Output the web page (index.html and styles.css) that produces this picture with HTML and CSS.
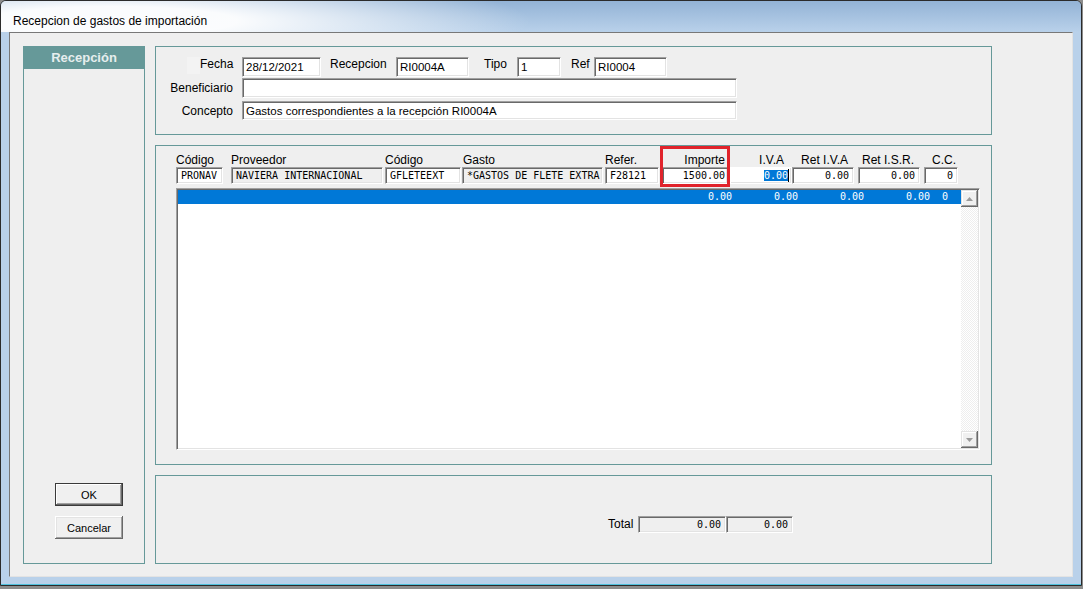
FILE: index.html
```html
<!DOCTYPE html>
<html lang="es">
<head>
  <meta charset="UTF-8">
  <meta name="viewport" content="width=device-width, initial-scale=1.0">
  <title>Recepcion de gastos de importación</title>
  <link rel="stylesheet" href="styles.css">
</head>
<body>
  <div class="window">
    <div class="titlebar">
      <span class="title">Recepcion de gastos de importación</span>
    </div>

    <div class="client">
      <div class="side">
        <div class="side-head">Recepción</div>
        <div class="side-buttons">
          <button class="btn btn-default">OK</button>
          <button class="btn">Cancelar</button>
        </div>
      </div>

      <div class="main">
        <!-- cabecera -->
        <div class="panel head-panel">
          <div class="form-row row-top">
            <span class="ghost"></span>
            <span class="lbl lbl-fecha">Fecha</span>
            <div class="field f-fecha">28/12/2021</div>
            <span class="lbl lbl-recep">Recepcion</span>
            <div class="field f-recep">RI0004A</div>
            <span class="lbl lbl-tipo">Tipo</span>
            <div class="field f-tipo">1</div>
            <span class="lbl lbl-ref">Ref</span>
            <div class="field f-ref">RI0004</div>
          </div>
          <div class="form-row row-benef">
            <span class="lbl lbl-wide">Beneficiario</span>
            <div class="field f-wide"></div>
          </div>
          <div class="form-row row-concepto">
            <span class="lbl lbl-wide">Concepto</span>
            <div class="field f-wide">Gastos correspondientes a la recepción RI0004A</div>
          </div>
        </div>

        <!-- detalle -->
        <div class="panel grid-panel">
          <div class="cols">
            <div class="col c1">
              <span class="col-label">Código</span>
              <div class="field mono">PRONAV</div>
            </div>
            <div class="col c2">
              <span class="col-label">Proveedor</span>
              <div class="field mono ro">NAVIERA INTERNACIONAL</div>
            </div>
            <div class="col c3">
              <span class="col-label">Código</span>
              <div class="field mono">GFLETEEXT</div>
            </div>
            <div class="col c4">
              <span class="col-label">Gasto</span>
              <div class="field mono ro">*GASTOS DE FLETE EXTRA</div>
            </div>
            <div class="col c5">
              <span class="col-label">Refer.</span>
              <div class="field mono">F28121</div>
            </div>
            <div class="col col-num c6">
              <span class="col-label">Importe</span>
              <div class="field mono num tight">1500.00</div>
            </div>
            <div class="col col-num c7">
              <span class="col-label">I.V.A</span>
              <div class="field mono num focus"><span class="sel">0.00</span><span class="caret"></span></div>
            </div>
            <div class="col col-num c8">
              <span class="col-label">Ret I.V.A</span>
              <div class="field mono num">0.00</div>
            </div>
            <div class="col col-num c9">
              <span class="col-label">Ret I.S.R.</span>
              <div class="field mono num">0.00</div>
            </div>
            <div class="col col-num c10">
              <span class="col-label">C.C.</span>
              <div class="field mono num">0</div>
            </div>
          </div>

          <div class="list">
            <div class="rows">
              <div class="row-sel">
                <span class="v0">0.00</span>
                <span class="v1">0.00</span>
                <span class="v1">0.00</span>
                <span class="v1">0.00</span>
                <span class="v4">0</span>
              </div>
            </div>
            <div class="scrollbar">
              <div class="sb-btn">
                <svg width="7" height="4" viewBox="0 0 7 4"><polygon points="0,4 7,4 3.5,0" fill="#9b9b9b"/></svg>
              </div>
              <div class="sb-track"></div>
              <div class="sb-btn">
                <svg width="7" height="4" viewBox="0 0 7 4"><polygon points="0,0 7,0 3.5,4" fill="#9b9b9b"/></svg>
              </div>
            </div>
          </div>

          <div class="highlight"></div>
        </div>

        <!-- totales -->
        <div class="panel total-panel">
          <span class="lbl total-lbl">Total</span>
          <div class="field mono num ro t1">0.00</div>
          <div class="field mono num ro t2">0.00</div>
        </div>
      </div>
    </div>
  </div>
</body>
</html>
```

FILE: styles.css
```css
* {
  box-sizing: border-box;
}

html, body {
  margin: 0;
}

body {
  width: 1083px;
  height: 589px;
  overflow: hidden;
  background: #8c8c8c;
  font-family: "Liberation Sans", Arial, sans-serif;
  font-size: 11.5px;
  color: #000;
}

.window {
  width: 1082px;
  height: 586px;
  display: flex;
  flex-direction: column;
  padding: 0 8px 8px;
  background: #b9d1ea;
  border: 1px solid #2b2b2b;
  border-radius: 6px 6px 0 0;
  box-shadow: inset 0 -1px 0 #4fc0dc;
}

.titlebar {
  flex: none;
  height: 31px;
  margin: 0 -8px;
  padding: 13px 0 0 12px;
  border-radius: 5px 5px 0 0;
  background:
    radial-gradient(ellipse 420px 48px at 110px 20px, rgba(255, 255, 255, 0.95) 30%, rgba(255, 255, 255, 0) 100%),
    linear-gradient(#93b3d6, #b9d1ea);
  font-size: 12px;
  line-height: 14px;
}

.client {
  flex: 1;
  display: flex;
  align-items: flex-start;
  gap: 10px;
  padding: 13px 0 0 13px;
  background: #efefef;
  border: 1px solid;
  border-color: #787878 #e3e3e3 #e3e3e3 #787878;
}

/* panel izquierdo */
.side {
  flex: none;
  width: 122px;
  height: 518px;
  display: flex;
  flex-direction: column;
  border: 1px solid #669999;
}

.side-head {
  height: 22px;
  line-height: 22px;
  text-align: center;
  background: #669999;
  color: #e6eeee;
  font-weight: bold;
  font-size: 13px;
}

.side-buttons {
  margin-top: auto;
  display: flex;
  flex-direction: column;
  gap: 10px;
  padding: 0 0 24px 31px;
}

.btn {
  width: 68px;
  height: 23px;
  padding: 0;
  border: none;
  background: #f0f0f0;
  font-family: "Liberation Sans", Arial, sans-serif;
  font-size: 11px;
  color: #000;
  box-shadow:
    inset -1px -1px 0 #696969,
    inset 1px 1px 0 #fff,
    inset -2px -2px 0 #a0a0a0,
    inset 2px 2px 0 #e3e3e3;
}

.btn-default {
  box-shadow:
    inset 0 0 0 1px #3a3a3a,
    inset -2px -2px 0 #696969,
    inset 2px 2px 0 #fff,
    inset -3px -3px 0 #a0a0a0;
}

/* columna principal */
.main {
  flex: none;
  width: 837px;
  display: flex;
  flex-direction: column;
  gap: 10px;
}

.panel {
  border: 1px solid #669999;
}

.head-panel {
  height: 89px;
  padding-top: 10px;
  display: flex;
  flex-direction: column;
}

.form-row {
  display: flex;
  height: 20px;
}

.row-top {
  align-items: flex-start;
}

.row-benef {
  margin-top: 1px;
  align-items: center;
}

.row-concepto {
  margin-top: 3px;
  height: 19px;
  align-items: center;
}

.lbl {
  flex: none;
  font-size: 12px;
  line-height: 14px;
  white-space: nowrap;
}

.ghost {
  flex: none;
  width: 13px;
  height: 17px;
  margin-left: 31px;
  background: #f3f3f3;
}

.lbl-fecha { width: 33px; text-align: right; }
.f-fecha { width: 79px; margin-left: 9px; }
.lbl-recep { width: 56px; margin-left: 9px; }
.f-recep { width: 73px; margin-left: 10px; }
.lbl-tipo { width: 25px; margin-left: 15px; }
.f-tipo { width: 44px; margin-left: 8px; }
.lbl-ref { width: 18px; margin-left: 10px; }
.f-ref { width: 73px; margin-left: 5px; }

.lbl-wide { width: 77px; text-align: right; }
.f-wide { width: 495px; margin-left: 9px; }

.field {
  flex: none;
  height: 100%;
  display: flex;
  align-items: center;
  padding: 0 4px 0 3px;
  background: #fff;
  border: 1px solid;
  border-color: #a0a0a0 #fff #fff #a0a0a0;
  box-shadow: inset 1px 1px 0 #696969, inset -1px -1px 0 #e3e3e3;
  white-space: nowrap;
  overflow: hidden;
}

.mono {
  font-family: "DejaVu Sans Mono", "Liberation Mono", monospace;
  font-size: 10px;
  padding-left: 4px;
}

.ro {
  background: #efefef;
}

.num {
  justify-content: flex-end;
}

.tight {
  padding-right: 2px;
}

.focus {
  border-color: #fff;
  box-shadow: inset -1px -1px 0 #e3e3e3;
  padding-right: 2px;
}

.sel {
  background: #0078d7;
  color: #fff;
  line-height: 11px;
}

.caret {
  width: 1px;
  height: 13px;
  background: #000;
}

/* detalle */
.grid-panel {
  position: relative;
  height: 320px;
  padding: 7px 0 0 20px;
}

.cols {
  display: flex;
}

.col {
  flex: none;
  display: flex;
  flex-direction: column;
}

.col-label {
  height: 14px;
  font-size: 12px;
  line-height: 15px;
  overflow: hidden;
  white-space: nowrap;
}

.col .field {
  height: 17px;
}

.col-num .col-label {
  text-align: right;
}

.c1 { width: 47px; }
.c2 { width: 152px; margin-left: 8px; }
.c3 { width: 76px; margin-left: 2px; }
.c4 { width: 141px; margin-left: 1px; }
.c4 .col-label { padding-left: 1px; }
.c5 { width: 54px; margin-left: 2px; }
.c6 { width: 66px; margin-left: 3px; }
.c6 .col-label { padding-right: 3px; }
.c7 { width: 62px; margin-left: 2px; }
.c7 .col-label { padding-right: 8px; }
.c8 { width: 62px; }
.c8 .col-label { padding-right: 6px; }
.c9 { width: 62px; margin-left: 4px; }
.c9 .col-label { padding-right: 6px; }
.c10 { width: 34px; margin-left: 4px; }
.c10 .col-label { padding-right: 2px; }

.list {
  margin-top: 4px;
  width: 804px;
  height: 262px;
  display: flex;
  padding: 1px;
  background: #fff;
  border: 1px solid;
  border-color: #a0a0a0 #fff #fff #a0a0a0;
  box-shadow: inset 1px 1px 0 #696969, inset -1px -1px 0 #e3e3e3;
}

.rows {
  flex: 1;
}

.row-sel {
  display: flex;
  height: 14px;
  line-height: 14px;
  background: #0078d7;
  color: #fff;
  font-family: "DejaVu Sans Mono", "Liberation Mono", monospace;
  font-size: 10px;
}

.row-sel span {
  flex: none;
  text-align: right;
}

.v0 { width: 554px; }
.v1 { width: 66px; }
.v4 { width: 18px; }

.scrollbar {
  flex: none;
  width: 17px;
  display: flex;
  flex-direction: column;
  background: repeating-conic-gradient(#eeeeee 0 25%, #fff 0 50%) 0 0 / 2px 2px;
}

.sb-btn {
  height: 17px;
  display: flex;
  align-items: center;
  justify-content: center;
  background: #f0f0f0;
  box-shadow:
    inset -1px -1px 0 #696969,
    inset 1px 1px 0 #e3e3e3,
    inset -2px -2px 0 #a0a0a0,
    inset 2px 2px 0 #fff;
}

.sb-track {
  flex: 1;
}

.highlight {
  position: absolute;
  left: 504px;
  top: 0;
  width: 70px;
  height: 41px;
  border: 3px solid #e0232b;
}

/* totales */
.total-panel {
  height: 89px;
  display: flex;
  align-items: flex-start;
  padding: 40px 0 0 452px;
}

.total-lbl {
  width: 27px;
  line-height: 17px;
}

.t1 {
  width: 88px;
  height: 17px;
  margin-left: 3px;
}

.t2 {
  width: 67px;
  height: 17px;
}
```
